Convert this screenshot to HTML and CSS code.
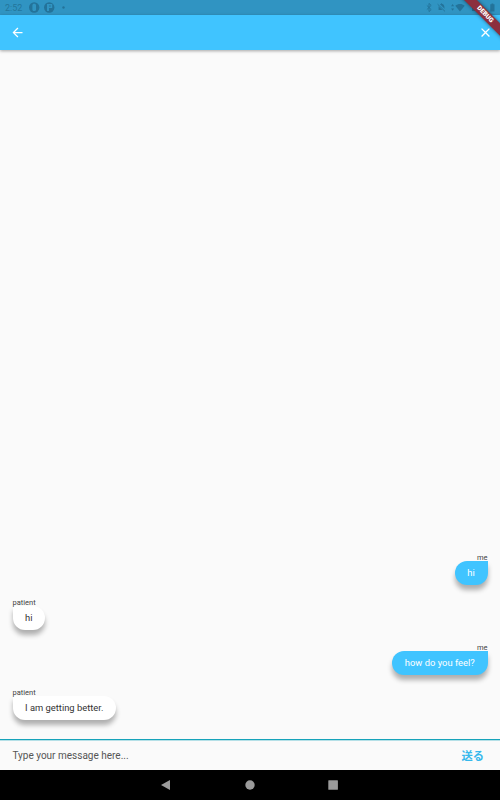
FILE: index.html
```html
<!DOCTYPE html>
<html lang="en">
<head>
<meta charset="utf-8">
<title>Chat</title>
<link rel="stylesheet" href="styles.css">
</head>
<body>
<div class="screen">
	<div class="statusbar">
		<span class="clock">2:52</span>
		<svg class="notices" width="60" height="15" viewBox="0 0 60 15">
			<circle cx="5.2" cy="7.5" r="5.2"/>
			<path class="cut" d="M3.4 5l.8-1.2h2L7 5v5l-.8 1h-2l-.8-1z"/>
			<circle cx="20.2" cy="7.5" r="5.2"/>
			<path class="cut" d="M18 4h5.2v4H20v3h-2z"/>
			<path d="M20 5.4h1.8v1.2H20z"/>
			<circle cx="34.5" cy="7.5" r="1.2"/>
		</svg>
		<svg class="system" width="76" height="15" viewBox="424 0 76 15">
			<path class="line" d="M426.8 5.4l4.4 4.2-2.2 2V3.4l2.2 2-4.4 4.2"/>
			<path d="M438.6 10V7c0-1.6.9-2.7 2.2-3 .1-.9 1.3-.9 1.4 0 1.3.3 2.2 1.4 2.2 3v3z"/>
			<path class="slash" d="M437.6 3.6l8 7.8"/>
			<path class="line" d="M437.6 4.2l7.4 7.2"/>
			<path d="M452.6 4l1.5 2.3h-3zM452.6 10.8l-1.5-2.3h3z"/>
			<path d="M455.3 5.8c2.8-2.4 6.6-2.4 9.4 0l-4.7 5.7z"/>
			<path d="M472 4h4v7h-4zM490.3 4.3h1.2v-.8h1.8v.8h1.2v7.2h-4.2z"/>
		</svg>
	</div>
	<div class="appbar">
		<svg width="15" height="15" viewBox="0 0 24 24"><path d="M20 11H7.83l5.59-5.59L12 4l-8 8 8 8 1.41-1.41L7.83 13H20v-2z"/></svg>
		<svg width="15" height="15" viewBox="0 0 24 24"><path d="M19 6.41L17.59 5 12 10.59 6.41 5 5 6.41 10.59 12 5 17.59 6.41 19 12 13.41 17.59 19 19 17.59 13.41 12z"/></svg>
	</div>
	<div class="messages">
		<div class="message me">
			<div class="sender">me</div>
			<div class="bubble">hi</div>
		</div>
		<div class="message">
			<div class="sender">patient</div>
			<div class="bubble">hi</div>
		</div>
		<div class="message me">
			<div class="sender">me</div>
			<div class="bubble">how do you feel?</div>
		</div>
		<div class="message">
			<div class="sender">patient</div>
			<div class="bubble">I am getting better.</div>
		</div>
	</div>
	<div class="compose">
		<span class="hint">Type your message here...</span>
		<span class="send" lang="ja">送る</span>
	</div>
	<div class="navbar">
		<svg width="500" height="30" viewBox="0 0 500 30">
			<path d="M161 15l9-5v10z"/>
			<circle cx="250" cy="15" r="4.7"/>
			<rect x="328.3" y="10.2" width="9.6" height="9.6" rx=".5"/>
		</svg>
	</div>
	<div class="ribbon"><span>DEBUG</span></div>
</div>
</body>
</html>
```
FILE: styles.css
```css
html,body{margin:0;padding:0}
body{font:9.4px/11px Roboto,"Noto Sans CJK JP",sans-serif;color:#222}
svg{display:block}
.screen{position:relative;display:flex;flex-direction:column;width:500px;height:800px;overflow:hidden;background:#fafafa}
.statusbar{display:flex;align-items:center;height:15px;box-sizing:border-box;padding-left:5px;background:#3094c2;color:#23769c}
.statusbar svg{fill:#23739a}
.statusbar .cut{fill:#3094c2}
.statusbar .line{fill:none;stroke:#23739a;stroke-width:.9}
.statusbar .slash{stroke:#3094c2;stroke-width:2.4}
.clock{width:24px;font-size:9px;line-height:16px}
.system{margin-left:auto}
.appbar{display:flex;align-items:center;justify-content:space-between;height:35px;padding:0 7.5px 0 10px;background:#40c4ff;box-shadow:0 1px 3px rgba(0,0,0,.35)}
.appbar svg{fill:#fff}
.messages{flex:1;display:flex;flex-direction:column;justify-content:flex-end;padding:0 12.5px 13px}
.message{display:flex;flex-direction:column;align-items:flex-start;height:33px;padding:6px 0}
.sender{position:relative;z-index:1;font-size:7.5px;line-height:11px;margin-bottom:-2px;color:#444}
.bubble{height:24px;box-sizing:border-box;padding:0 12.5px;line-height:24px;border-radius:0 12.5px 12.5px 12.5px;background:#fff;color:#333;box-shadow:0 5px 5px rgba(0,0,0,.3)}
.me{align-items:flex-end}
.me .bubble{padding-right:12.8px;border-radius:12.5px 0 12.5px 12.5px;background:#40c4ff;color:#fff}
.compose{display:flex;align-items:center;justify-content:space-between;height:31px;box-sizing:border-box;padding:0 16px 0 12.5px;border-top:1px solid #16a3ba;box-shadow:0 1px 0 #b5e0e7 inset}
.hint{font-size:10px;color:#555}
.send{padding-top:2px;font-size:11.25px;font-weight:bold;color:#36b8ec}
.navbar{height:30px;background:#000}
.navbar svg{fill:#9b9b9b}
/* debug banner across the top right corner */
.ribbon{position:absolute;top:10px;right:-25px;width:80px;height:9px;background:#8c2f3e;color:#fff;font-size:6.4px;font-weight:900;line-height:9px;text-align:center;transform:rotate(45deg);box-shadow:0 0 4px rgba(0,0,0,.5)}
```
